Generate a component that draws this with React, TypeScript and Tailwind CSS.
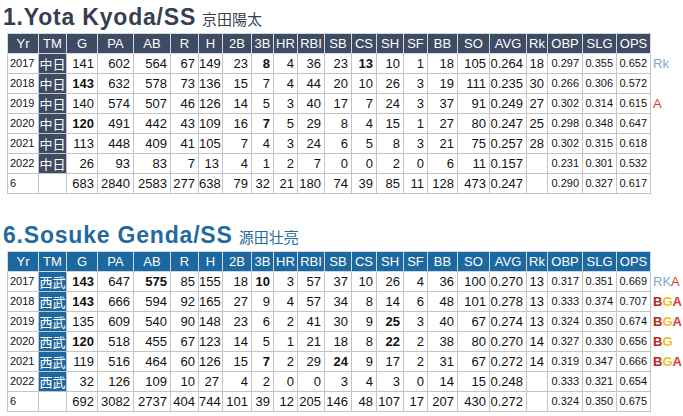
import type { ReactNode } from "react"

const SANS = "font-['Liberation_Sans',Arial,sans-serif]"
const CJK = "font-['Noto_Sans_CJK_JP','Liberation_Sans',sans-serif]"

const COLUMNS = ["Yr", "TM", "G", "PA", "AB", "R", "H", "2B", "3B", "HR", "RBI", "SB", "CS", "SH", "SF", "BB", "SO", "AVG", "Rk", "OBP", "SLG", "OPS"]

const WIDTHS = [
  "w-[31px]", "w-[28px]", "w-[31px]", "w-[36px]", "w-[37px]", "w-[28px]", "w-[24px]", "w-[29px]",
  "w-[22px]", "w-[24px]", "w-[27px]", "w-[27px]", "w-[25px]", "w-[27px]", "w-[24px]", "w-[30px]",
  "w-[32px]", "w-[37px]", "w-[21px]", "w-[35px]", "w-[34px]", "w-[34px]"
]

// "*" in front of a value = league-leading, shown bold
interface StatRow {
  cells: string[]
  note?: ReactNode
}

interface PlayerTableProps {
  title: string
  kanji: string
  titleColor: string
  headColor: string
  rows: StatRow[]
  className?: string
}

const Rk = <span className="text-[#7ea8d6]">Rk</span>
const A = <span className="text-[#dc3a30]">A</span>
const RKA = (
  <span>
    <span className="text-[#7ea8d6]">RK</span>
    <span className="text-[#dc3a30]">A</span>
  </span>
)
const BG = (
  <span className="font-bold">
    <span className="text-[#b3261e]">B</span>
    <span className="text-[#f0c020]">G</span>
  </span>
)
const BGA = (
  <span className="font-bold">
    <span className="text-[#b3261e]">B</span>
    <span className="text-[#f0c020]">G</span>
    <span className="text-[#dc3a30]">A</span>
  </span>
)

const kyoda: StatRow[] = [
  { cells: ["2017", "中日", "141", "602", "564", "67", "149", "23", "*8", "4", "36", "23", "*13", "10", "1", "18", "105", "0.264", "18", "0.297", "0.355", "0.652"], note: Rk },
  { cells: ["2018", "中日", "*143", "632", "578", "73", "136", "15", "7", "4", "44", "20", "10", "26", "3", "19", "111", "0.235", "30", "0.266", "0.306", "0.572"] },
  { cells: ["2019", "中日", "140", "574", "507", "46", "126", "14", "5", "3", "40", "17", "7", "24", "3", "37", "91", "0.249", "27", "0.302", "0.314", "0.615"], note: A },
  { cells: ["2020", "中日", "*120", "491", "442", "43", "109", "16", "*7", "5", "29", "8", "4", "15", "1", "27", "80", "0.247", "25", "0.298", "0.348", "0.647"] },
  { cells: ["2021", "中日", "113", "448", "409", "41", "105", "7", "4", "3", "24", "6", "5", "8", "3", "21", "75", "0.257", "28", "0.302", "0.315", "0.618"] },
  { cells: ["2022", "中日", "26", "93", "83", "7", "13", "4", "1", "2", "7", "0", "0", "2", "0", "6", "11", "0.157", "", "0.231", "0.301", "0.532"] },
  { cells: ["6", "", "683", "2840", "2583", "277", "638", "79", "32", "21", "180", "74", "39", "85", "11", "128", "473", "0.247", "", "0.290", "0.327", "0.617"] }
]

const genda: StatRow[] = [
  { cells: ["2017", "西武", "*143", "647", "*575", "85", "155", "18", "*10", "3", "57", "37", "10", "26", "4", "36", "100", "0.270", "13", "0.317", "0.351", "0.669"], note: RKA },
  { cells: ["2018", "西武", "*143", "666", "594", "92", "165", "27", "9", "4", "57", "34", "8", "14", "6", "48", "101", "0.278", "13", "0.333", "0.374", "0.707"], note: BGA },
  { cells: ["2019", "西武", "135", "609", "540", "90", "148", "23", "6", "2", "41", "30", "9", "*25", "3", "40", "67", "0.274", "13", "0.324", "0.350", "0.674"], note: BGA },
  { cells: ["2020", "西武", "*120", "518", "455", "67", "123", "14", "5", "1", "21", "18", "8", "*22", "2", "38", "80", "0.270", "14", "0.327", "0.330", "0.656"], note: BG },
  { cells: ["2021", "西武", "119", "516", "464", "60", "126", "15", "*7", "2", "29", "*24", "9", "17", "2", "31", "67", "0.272", "14", "0.319", "0.347", "0.666"], note: BGA },
  { cells: ["2022", "西武", "32", "126", "109", "10", "27", "4", "2", "0", "0", "3", "4", "3", "0", "14", "15", "0.248", "", "0.333", "0.321", "0.654"] },
  { cells: ["6", "", "692", "3082", "2737", "404", "744", "101", "39", "12", "205", "146", "48", "107", "17", "207", "430", "0.272", "", "0.324", "0.350", "0.675"] }
]

function cellClass(col: number) {
  if (col === 0) return "text-left pl-[2px] text-[11px]"
  if (col >= 19) return "text-right pr-[3px] text-[11px]"
  return "text-right pr-[3px] text-[13px]"
}

function PlayerTable({ title, kanji, titleColor, headColor, rows, className }: PlayerTableProps) {
  return (
    <section className={className}>
      <div className={`h-[33px] whitespace-nowrap pl-[3px] text-[23px] font-bold leading-[33px] tracking-[0.8px] ${titleColor}`}>
        <span className={SANS}>{title}</span>
        <span className={`ml-[6px] text-[15px] font-normal tracking-normal ${CJK}`}>{kanji}</span>
      </div>
      <table className={`ml-[7px] w-[676px] table-fixed border-collapse text-[#111] ${SANS}`}>
        <colgroup>
          {WIDTHS.map((w, i) => (
            <col key={i} className={w} />
          ))}
          <col className="w-[33px]" />
        </colgroup>
        <thead>
          <tr>
            {COLUMNS.map((c) => (
              <th
                key={c}
                className={`h-[20px] border border-[#d4d8de] p-0 text-center text-[13px] font-normal leading-none text-white ${headColor}`}
              >
                {c}
              </th>
            ))}
            <th className="p-0" />
          </tr>
        </thead>
        <tbody>
          {rows.map((row, r) => (
            <tr key={r}>
              {row.cells.map((v, i) => {
                if (i === 1) {
                  return (
                    <td
                      key={i}
                      className={`h-[20px] border border-[#c4c4c4] p-0 text-center text-[13px] leading-none text-white ${v ? headColor : ""} ${CJK}`}
                    >
                      {v}
                    </td>
                  )
                }
                const bold = v.startsWith("*")
                return (
                  <td
                    key={i}
                    className={`h-[20px] whitespace-nowrap border border-[#c4c4c4] p-0 leading-none ${cellClass(i)} ${bold ? "font-bold" : ""}`}
                  >
                    {bold ? v.slice(1) : v}
                  </td>
                )
              })}
              <td className="whitespace-nowrap p-0 pl-[2px] text-left text-[13px] leading-none">{row.note}</td>
            </tr>
          ))}
        </tbody>
      </table>
    </section>
  )
}

export default function App() {
  return (
    <div className="h-[416px] w-[683px] overflow-hidden bg-white">
      <PlayerTable
        title="1.Yota Kyoda/SS"
        kanji="京田陽太"
        titleColor="text-[#353f50]"
        headColor="bg-[#3d4b63]"
        rows={kyoda}
      />
      <PlayerTable
        title="6.Sosuke Genda/SS"
        kanji="源田壮亮"
        titleColor="text-[#1f6b9f]"
        headColor="bg-[#1b69a0]"
        rows={genda}
        className="mt-[24px]"
      />
    </div>
  )
}
